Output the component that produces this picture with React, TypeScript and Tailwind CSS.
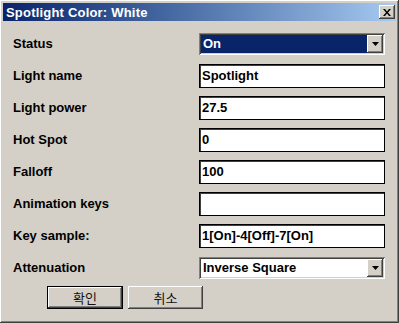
import React from 'react';

const raised =
  'shadow-[inset_-1px_-1px_#404040,inset_1px_1px_#ffffff,inset_-2px_-2px_#808080,inset_2px_2px_#d4d0c8]';
const sunken =
  'shadow-[inset_1px_1px_#808080,inset_-1px_-1px_#ffffff,inset_2px_2px_#404040,inset_-2px_-2px_#d4d0c8]';

function DropArrow() {
  return (
    <div className={`w-[16px] h-full bg-[#d4d0c8] flex items-center justify-center ${raised}`}>
      <svg width="7" height="4" viewBox="0 0 7 4">
        <path d="M0 0h7L3.5 4z" fill="#000" />
      </svg>
    </div>
  );
}

function Combo({ value, selected }: { value: string; selected?: boolean }) {
  return (
    <div className={`w-[186px] h-[22px] bg-white p-[2px] flex ${sunken}`}>
      <div
        className={`flex-1 flex items-center pl-[2px] ${
          selected ? 'bg-[#0a246a] text-white' : 'text-black'
        }`}
      >
        {value}
      </div>
      <DropArrow />
    </div>
  );
}

function Field({ value }: { value: string }) {
  return (
    <div className="w-[186px] h-[24px] bg-white border border-black shadow-[inset_1px_1px_#404040] flex items-center pl-[2px] text-black">
      {value}
    </div>
  );
}

const rows: { label: string; field: React.ReactNode }[] = [
  { label: 'Status', field: <Combo value="On" selected /> },
  { label: 'Light name', field: <Field value="Spotlight" /> },
  { label: 'Light power', field: <Field value="27.5" /> },
  { label: 'Hot Spot', field: <Field value="0" /> },
  { label: 'Falloff', field: <Field value="100" /> },
  { label: 'Animation keys', field: <Field value="" /> },
  { label: 'Key sample:', field: <Field value="1[On]-4[Off]-7[On]" /> },
  { label: 'Attenuation', field: <Combo value="Inverse Square" /> },
];

export default function App() {
  return (
    <div
      className={`w-[399px] h-[323px] bg-[#d4d0c8] p-[3px] flex flex-col font-['Liberation_Sans',Arial,sans-serif] ${raised}`}
    >
      {/* title bar */}
      <div className="h-[18px] flex items-center justify-between pl-[3px] pr-[1px] bg-linear-to-r from-[#0a246a] to-[#a6caf0]">
        <span className="text-white font-bold text-[13px] tracking-[0.2px] leading-none">
          Spotlight Color: White
        </span>
        <div className={`w-[16px] h-[14px] bg-[#d4d0c8] flex items-center justify-center ${raised}`}>
          <svg width="8" height="7" viewBox="0 0 8 7">
            <path d="M0 0h2l2 2.5L6 0h2L5 3.5 8 7H6L4 4.5 2 7H0l3-3.5z" fill="#000" />
          </svg>
        </div>
      </div>

      {/* form */}
      <div className="mt-[7px] pl-[10px] pr-[11px] flex flex-col font-bold text-[13px]">
        {rows.map((r) => (
          <div key={r.label} className="h-[32px] flex items-center">
            <span className="w-[186px] text-black">{r.label}</span>
            {r.field}
          </div>
        ))}
      </div>

      {/* buttons */}
      <div className="mt-[2px] pl-[44px] flex gap-[5px] text-[13px] font-['Noto_Sans_CJK_KR',sans-serif] text-[#111]">
        <button className="w-[76px] h-[23px] border border-black bg-[#d4d0c8] shadow-[inset_-1px_-1px_#404040,inset_1px_1px_#ffffff,inset_-2px_-2px_#808080] flex items-center justify-center leading-none">
          확인
        </button>
        <button className={`w-[75px] h-[23px] bg-[#d4d0c8] flex items-center justify-center leading-none ${raised}`}>
          취소
        </button>
      </div>
    </div>
  );
}
